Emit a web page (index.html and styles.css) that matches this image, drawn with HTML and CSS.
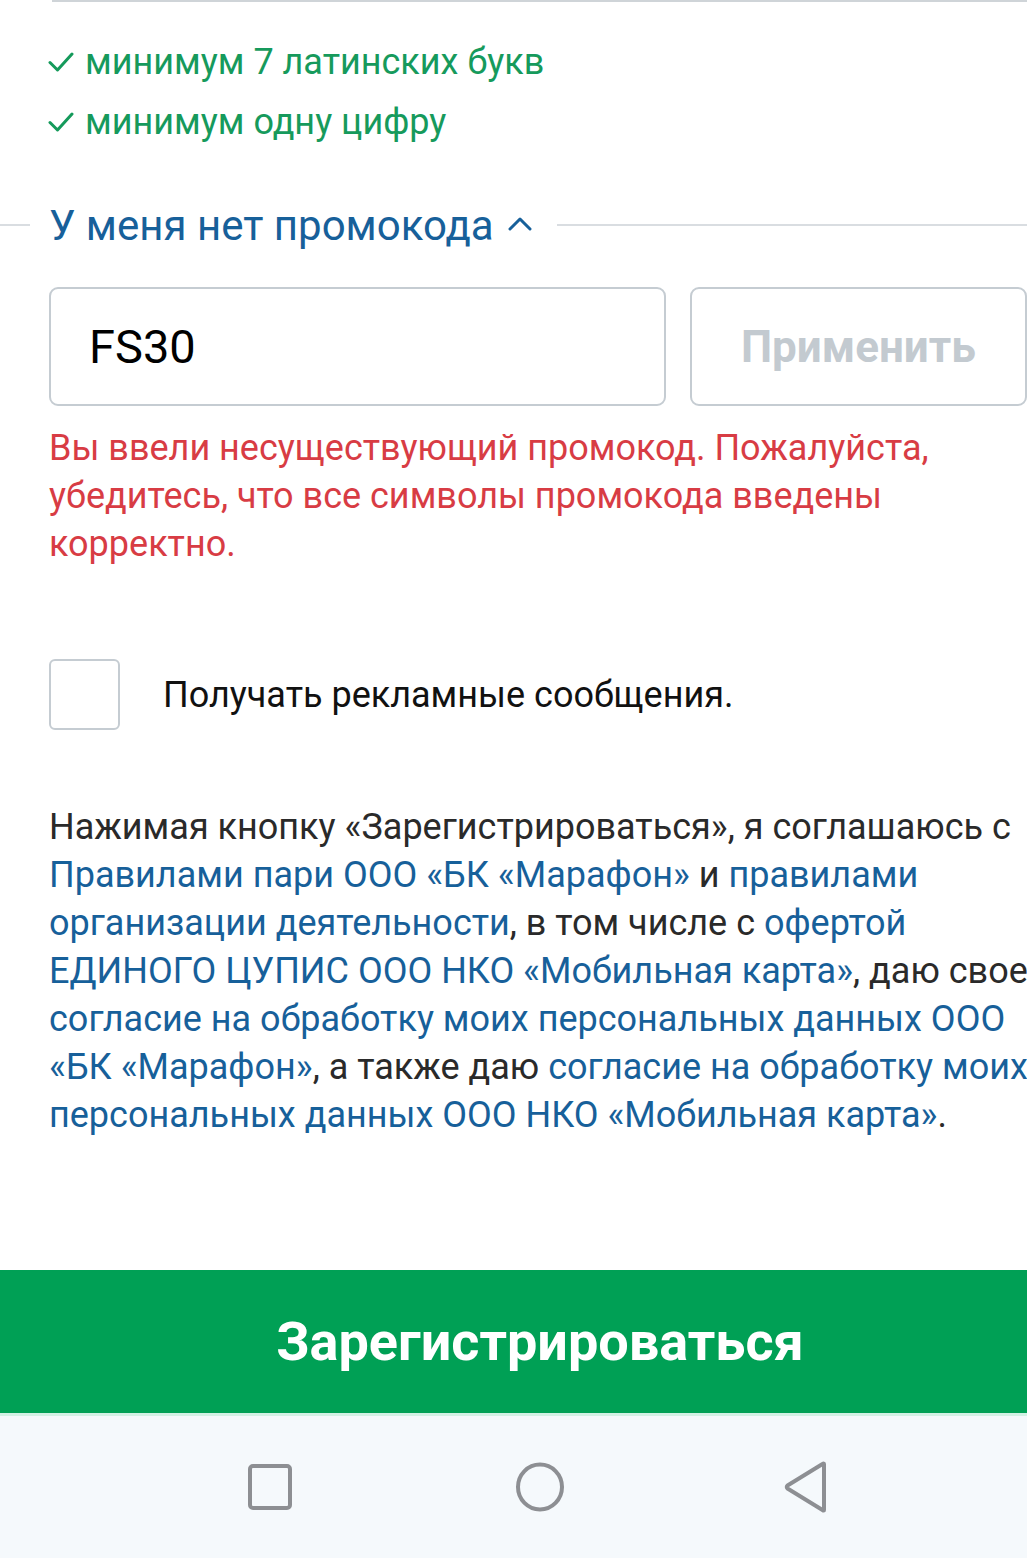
FILE: index.html
```html
<!DOCTYPE html>
<html lang="ru">
<head>
<meta charset="utf-8">
<link rel="stylesheet" href="styles.css">
</head>
<body>
<div class="page">
  <div class="top-line"></div>
  <ul class="rules">
    <li><svg class="check" viewBox="0 0 26 22" width="26" height="22"><path d="M2 11.5 L9.5 19 L24 3" fill="none" stroke="#159a5b" stroke-width="3" stroke-linecap="round" stroke-linejoin="round"/></svg>минимум 7 латинских букв</li>
    <li><svg class="check" viewBox="0 0 26 22" width="26" height="22"><path d="M2 11.5 L9.5 19 L24 3" fill="none" stroke="#159a5b" stroke-width="3" stroke-linecap="round" stroke-linejoin="round"/></svg>минимум одну цифру</li>
  </ul>
  <div class="promo-head">
    <span class="line-left"></span>
    <span class="promo-title">У меня нет промокода</span>
    <svg class="chev" viewBox="0 0 24 16" width="24" height="16"><path d="M2 14 L12 4 L22 14" fill="none" stroke="#17609a" stroke-width="3" stroke-linecap="round" stroke-linejoin="round"/></svg>
    <span class="line-right"></span>
  </div>
  <div class="promo-row">
    <div class="promo-input">FS30</div>
    <div class="promo-btn">Применить</div>
  </div>
  <p class="error">Вы ввели несуществующий промокод. Пожалуйста, убедитесь, что все символы промокода введены корректно.</p>
  <label class="agree">
    <span class="box"></span>
    <span class="agree-text">Получать рекламные сообщения.</span>
  </label>
  <p class="legal">Нажимая кнопку «Зарегистрироваться», я соглашаюсь с <a>Правилами пари ООО «БК «Марафон»</a> и <a>правилами организации деятельности</a>, в том числе с <a>офертой ЕДИНОГО ЦУПИС ООО НКО «Мобильная карта»</a>, даю свое <a>согласие на обработку моих персональных данных ООО «БК «Марафон»</a>, а также даю <a>согласие на обработку моих персональных данных ООО НКО «Мобильная карта»</a>.</p>
</div>
<div class="register">Зарегистрироваться</div>
<div class="nav-sep"></div>
<nav class="navbar">
  <div class="nav-cell"><svg viewBox="0 0 44 46" width="44" height="46"><rect x="2" y="2" width="40" height="42" rx="3" fill="none" stroke="#8d8f93" stroke-width="4"/></svg></div>
  <div class="nav-cell"><svg viewBox="0 0 50 50" width="50" height="50"><ellipse cx="25" cy="25" rx="22" ry="22.5" fill="none" stroke="#8d8f93" stroke-width="4"/></svg></div>
  <div class="nav-cell back"><svg viewBox="0 0 46 52" width="46" height="52"><path d="M41 3 L41 49 Q41 50 39.5 49 L4.5 27.5 Q3 26 4.5 24.5 L39.5 3 Q41 2 41 3 Z" fill="none" stroke="#8d8f93" stroke-width="4" stroke-linejoin="round"/></svg></div>
</nav>
</body>
</html>
```

FILE: styles.css
```css
* { box-sizing: border-box; }
html, body { margin: 0; padding: 0; }
body {
  width: 1027px;
  height: 1558px;
  overflow: hidden;
  background: #ffffff;
  font-family: Roboto, "Noto Sans", sans-serif;
  color: #1c1c1c;
}
.page {
  padding: 0 0 0 49px;
  height: 1270px;
}
.top-line {
  height: 2px;
  margin-left: 3px;
  background: #cfd4d8;
}
.rules {
  list-style: none;
  margin: 30px 0 0;
  padding: 0;
}
.rules li {
  display: flex;
  align-items: center;
  height: 60px;
  font-size: 36px;
  color: #169a5c;
}
.check {
  margin-right: 11px;
  margin-left: -1px;
}
.promo-head {
  display: flex;
  align-items: center;
  margin: 43px 0 0 -49px;
  height: 60px;
}
.line-left {
  width: 30px;
  height: 2px;
  background: #d9dde1;
  margin-right: 19px;
}
.promo-title {
  font-size: 42px;
  color: #17609a;
}
.chev {
  margin: 0 0 4px 14px;
}
.line-right {
  flex: 1;
  height: 2px;
  background: #d9dde1;
  margin-left: 25px;
}
.promo-row {
  display: flex;
  gap: 24px;
  margin-top: 32px;
  height: 119px;
}
.promo-input {
  width: 618px;
  border: 2px solid #c5ccd2;
  border-radius: 9px;
  display: flex;
  align-items: center;
  padding-left: 38px;
  font-size: 47px;
  color: #000;
}
.promo-btn {
  width: 338px;
  border: 2px solid #c5ccd2;
  border-radius: 9px;
  display: flex;
  align-items: center;
  justify-content: center;
  padding-left: 0;
  font-size: 44px;
  font-weight: 700;
  color: #c3cad0;
}
.error {
  margin: 18px 0 0;
  padding-right: 40px;
  font-size: 36px;
  line-height: 48px;
  color: #d83c44;
}
.agree {
  display: flex;
  align-items: center;
  margin-top: 91px;
}
.box {
  width: 71px;
  height: 71px;
  border: 2px solid #c5ccd2;
  border-radius: 6px;
  flex: none;
}
.agree-text {
  margin-left: 43px;
  font-size: 36px;
  color: #111;
}
.legal {
  margin: 73px 0 0;
  font-size: 36px;
  line-height: 48px;
  color: #2a2a2a;
  width: 990px;
}
.legal a {
  color: #17609a;
}
.register {
  height: 143px;
  background: #00a055;
  color: #fff;
  font-size: 54px;
  font-weight: 700;
  display: flex;
  align-items: center;
  justify-content: center;
  padding-left: 53px;
}
.nav-sep {
  height: 3px;
  background: #d2f1e4;
}
.navbar {
  height: 142px;
  background: #f5f9fc;
  display: flex;
  padding-left: 135px;
  align-items: center;
}
.nav-cell {
  width: 270px;
  display: flex;
  justify-content: center;
}
.back { padding-right: 8px; }
```
